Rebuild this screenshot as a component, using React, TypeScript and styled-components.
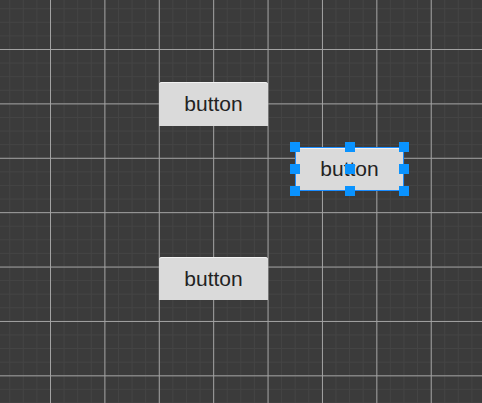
import React from "react";
import styled, { createGlobalStyle } from "styled-components";

const Global = createGlobalStyle`
  html, body { margin: 0; padding: 0; background: #3b3b3b; }
  body { font-family: "Liberation Sans", Arial, sans-serif; }
`;

const Canvas = styled.div`
  position: relative;
  width: 482px;
  height: 403px;
  overflow: hidden;
  background-color: #3b3b3b;
  background-image:
    linear-gradient(to right, #a3a3a3 1px, transparent 1px),
    linear-gradient(to bottom, #a3a3a3 1px, transparent 1px),
    linear-gradient(to right, #444444 1px, transparent 1px),
    linear-gradient(to bottom, #444444 1px, transparent 1px);
  background-size: 54.4px 54.4px, 54.4px 54.4px, 13.6px 13.6px, 13.6px 13.6px;
  background-position: 50px 49px, 50px 49px, 50px 49px, 50px 49px;
`;

const Widget = styled.div<{ $x: number; $y: number; $h: number }>`
  position: absolute;
  left: ${(p) => p.$x}px;
  top: ${(p) => p.$y}px;
  width: 109px;
  height: ${(p) => p.$h}px;
`;

const Face = styled.div<{ $selected?: boolean }>`
  box-sizing: border-box;
  width: 100%;
  height: 100%;
  display: flex;
  align-items: center;
  justify-content: center;
  background: #dadada;
  border-radius: 3px 3px 0 0;
  box-shadow: inset 0 1px 0 #f2f2f2;
  border: ${(p) => (p.$selected ? "1px solid #1a8cff" : "none")};
  color: #222222;
  font-family: "Liberation Sans", Arial, sans-serif;
  font-size: 21px;
  line-height: 1;
  padding-bottom: 1px;
`;

const Handle = styled.div<{ $cx: string; $cy: string }>`
  position: absolute;
  width: 10px;
  height: 10px;
  background: #0a93ff;
  left: calc(${(p) => p.$cx} - 5px);
  top: calc(${(p) => p.$cy} - 5px);
`;

const handles: [string, string][] = [
  ["0%", "0%"],
  ["50%", "0%"],
  ["100%", "0%"],
  ["0%", "50%"],
  ["50%", "50%"],
  ["100%", "50%"],
  ["0%", "100%"],
  ["50%", "100%"],
  ["100%", "100%"],
];

export default function App() {
  return (
    <>
      <Global />
      <Canvas>
        <Widget $x={159} $y={82} $h={44}>
          <Face>button</Face>
        </Widget>
        <Widget $x={295} $y={147} $h={44}>
          <Face $selected>button</Face>
          {handles.map(([cx, cy], i) => (
            <Handle key={i} $cx={cx} $cy={cy} />
          ))}
        </Widget>
        <Widget $x={159} $y={257} $h={43}>
          <Face>button</Face>
        </Widget>
      </Canvas>
    </>
  );
}
